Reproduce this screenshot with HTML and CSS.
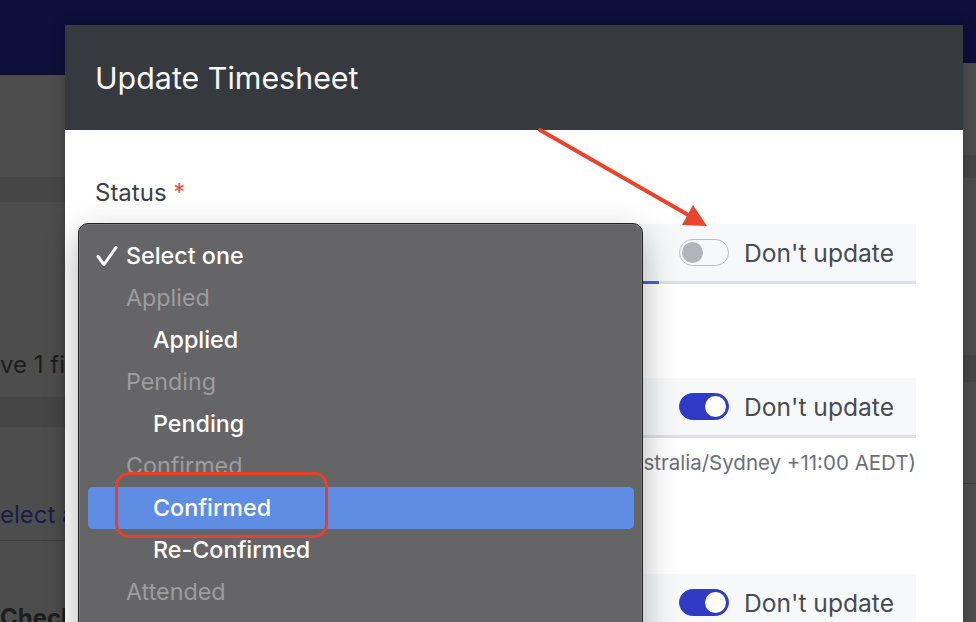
FILE: index.html
```html
<!DOCTYPE html>
<html lang="en">
<head>
  <meta charset="UTF-8">
  <meta name="viewport" content="width=device-width, initial-scale=1.0">
  <title>Update Timesheet</title>
  <link rel="stylesheet" href="styles.css">
</head>
<body>
  <!-- dimmed page behind the modal -->
  <div class="backdrop">
    <div class="strip strip-left">
      <div class="nav nav-tall"></div>
      <div class="block" style="height: 102px;"></div>
      <div class="band" style="height: 25px;"></div>
      <div class="block block-text" style="height: 195px;"><span class="bg-text">ve 1 file</span></div>
      <div class="band" style="height: 30px;"></div>
      <div class="block block-text" style="height: 113px;"><span class="bg-link">elect all</span></div>
      <div class="block block-line"><span class="bg-bold">Check</span></div>
    </div>
    <div class="strip strip-mid">
      <div class="nav"></div>
    </div>
    <div class="strip strip-right">
      <div class="nav"></div>
      <div class="block" style="height: 92px;"></div>
      <div class="band" style="height: 23px;"></div>
      <div class="block" style="height: 177px;"></div>
      <div class="band" style="height: 27px;"></div>
      <div class="block" style="height: 101px;"></div>
      <div class="block block-line"></div>
    </div>
  </div>

  <div class="modal">
    <div class="modal-header">
      <h2>Update Timesheet</h2>
    </div>
    <div class="modal-body">
      <div class="field">
        <label class="field-label">Status <span class="required">*</span></label>
        <div class="field-row">
          <div class="field-input is-focused"></div>
          <div class="field-toggle">
            <span class="toggle"></span>
            <span class="toggle-text">Don't update</span>
          </div>
        </div>
      </div>

      <div class="field">
        <label class="field-label">Start time</label>
        <div class="field-row">
          <div class="field-input"></div>
          <div class="field-toggle">
            <span class="toggle is-on"></span>
            <span class="toggle-text">Don't update</span>
          </div>
        </div>
        <p class="field-help">Times are in (Australia/Sydney +11:00 AEDT)</p>
      </div>

      <div class="field">
        <label class="field-label">Finish time</label>
        <div class="field-row">
          <div class="field-input"></div>
          <div class="field-toggle">
            <span class="toggle is-on"></span>
            <span class="toggle-text">Don't update</span>
          </div>
        </div>
      </div>
    </div>
  </div>

  <!-- native select popup -->
  <ul class="select-menu">
    <li class="menu-item is-checked">
      <svg class="check" width="22" height="22" viewBox="0 0 22 22"><path d="M2 11.5 L8 19.5 L20 2.5" fill="none" stroke="#fff" stroke-width="3" stroke-linecap="round" stroke-linejoin="round"/></svg>
      Select one
    </li>
    <li class="menu-group">Applied</li>
    <li class="menu-item">Applied</li>
    <li class="menu-group">Pending</li>
    <li class="menu-item">Pending</li>
    <li class="menu-group">Confirmed</li>
    <li class="menu-item is-active">Confirmed</li>
    <li class="menu-item">Re-Confirmed</li>
    <li class="menu-group">Attended</li>
  </ul>

  <!-- screenshot annotations -->
  <div class="mark-box"></div>
  <svg class="annotation" width="976" height="622" viewBox="0 0 976 622">
    <line x1="540" y1="130" x2="690" y2="216" stroke="#e8452c" stroke-width="4" stroke-linecap="round"/>
    <polygon points="707,226 682,225 693,205" fill="#e8452c"/>
  </svg>
</body>
</html>
```

FILE: styles.css
```css
/* General Styles */
body {
  margin: 0;
  width: 976px;
  height: 622px;
  overflow: hidden;
  position: relative;
  font-family: Inter, "Noto Sans", sans-serif;
  background-color: #4d4d4d;
}

/* Backdrop page */
.backdrop {
  display: flex;
  height: 622px;
}

.strip {
  display: flex;
  flex-direction: column;
  overflow: hidden;
}

.strip > div {
  flex-shrink: 0;
}

.strip-left {
  width: 65px;
}

.strip-mid {
  flex: 1;
}

.strip-right {
  width: 13px;
}

.nav {
  height: 63px;
  background-color: #0e0f3b;
}

.nav-tall {
  height: 75px;
}

.block {
  background-color: #4d4d4d;
}

.band {
  background-color: #464646;
}

.block-text {
  white-space: nowrap;
  line-height: 30px;
}

.strip > .block-line {
  flex: 1 1 auto;
  min-height: 0;
  border-top: 1px solid #3f3f3f;
  white-space: nowrap;
}

.bg-text {
  display: block;
  font-size: 24px;
  color: #1d1d1d;
  padding-top: 148px;
}

.bg-link {
  display: block;
  font-size: 24px;
  color: #1b1d48;
  padding-top: 73px;
}

.bg-bold {
  display: block;
  font-size: 24px;
  font-weight: 700;
  color: #1d1d1d;
  margin-top: 62px;
}

/* Modal */
.modal {
  position: absolute;
  left: 65px;
  top: 25px;
  width: 898px;
  height: 620px;
  background-color: #fff;
  box-shadow: 0 0 12px rgba(0, 0, 0, 0.25);
}

.modal-header {
  height: 105px;
  padding: 0 30px;
  display: flex;
  align-items: center;
  background-color: #363a3e;
}

.modal-header h2 {
  margin: 0;
  font-size: 30.4px;
  font-weight: 400;
  color: #f7f7f7;
}

.modal-body {
  padding: 48px 47px 0 30px;
  display: flex;
  flex-direction: column;
  gap: 48px;
}

.field {
  display: flex;
  flex-direction: column;
}

.field-label {
  height: 30px;
  line-height: 30px;
  font-size: 24px;
  color: #3a3f46;
  margin-bottom: 16px;
}

.required {
  color: #e5484d;
}

.field-row {
  display: grid;
  grid-template-columns: 1fr 257px;
  height: 60px;
  background-color: #f7f8fa;
}

.field-input {
  border-bottom: 3px solid #dfe0e6;
}

.field-input.is-focused {
  border-bottom-color: #5b5bce;
}

.field-toggle {
  display: flex;
  align-items: center;
  gap: 15px;
  padding-left: 20px;
  border-bottom: 3px solid #dfe0e6;
}

.toggle {
  position: relative;
  width: 48px;
  height: 25px;
  border: 1px solid #b7bbc1;
  border-radius: 14px;
  background-color: #f7f8fa;
}

.toggle::after {
  content: "";
  position: absolute;
  top: 2px;
  left: 2px;
  width: 21px;
  height: 21px;
  border-radius: 50%;
  background-color: #b0b5bc;
}

.toggle.is-on {
  border-color: #2f3bc4;
  background-color: #2f3bc4;
}

.toggle.is-on::after {
  left: 25px;
  background-color: #fff;
}

.toggle-text {
  font-size: 24.6px;
  color: #464b53;
}

.field-help {
  margin: 12px 0 4px;
  line-height: 26px;
  font-size: 20.5px;
  color: #6b7079;
  text-align: right;
  white-space: nowrap;
}

/* Select popup */
.select-menu {
  position: absolute;
  left: 78px;
  top: 223px;
  width: 546px;
  height: 420px;
  margin: 0;
  padding: 11px 8px 0 9px;
  list-style: none;
  background-color: #656567;
  border: 1px solid #232323;
  border-radius: 10px;
  box-shadow: inset 0 0 0 1px rgba(255, 255, 255, 0.12), 0 12px 34px rgba(0, 0, 0, 0.3);
  font-family: Inter, "Noto Sans", sans-serif;
  font-size: 23.3px;
}

.select-menu li {
  height: 42px;
  line-height: 42px;
  white-space: nowrap;
}

.menu-group {
  padding-left: 38px;
  color: #9d9d9f;
}

.menu-item {
  padding-left: 65px;
  color: #fff;
  font-weight: 500;
}

.menu-item.is-checked {
  display: flex;
  align-items: center;
  padding-left: 8px;
}

.check {
  margin-right: 8px;
}

.menu-item.is-active {
  background-color: #5f8de4;
  border-radius: 5px;
}

/* Annotations */
.mark-box {
  position: absolute;
  left: 115px;
  top: 472px;
  width: 207px;
  height: 60px;
  border: 3px solid #e5422c;
  border-radius: 14px;
}

.annotation {
  position: absolute;
  left: 0;
  top: 0;
  pointer-events: none;
}
```
